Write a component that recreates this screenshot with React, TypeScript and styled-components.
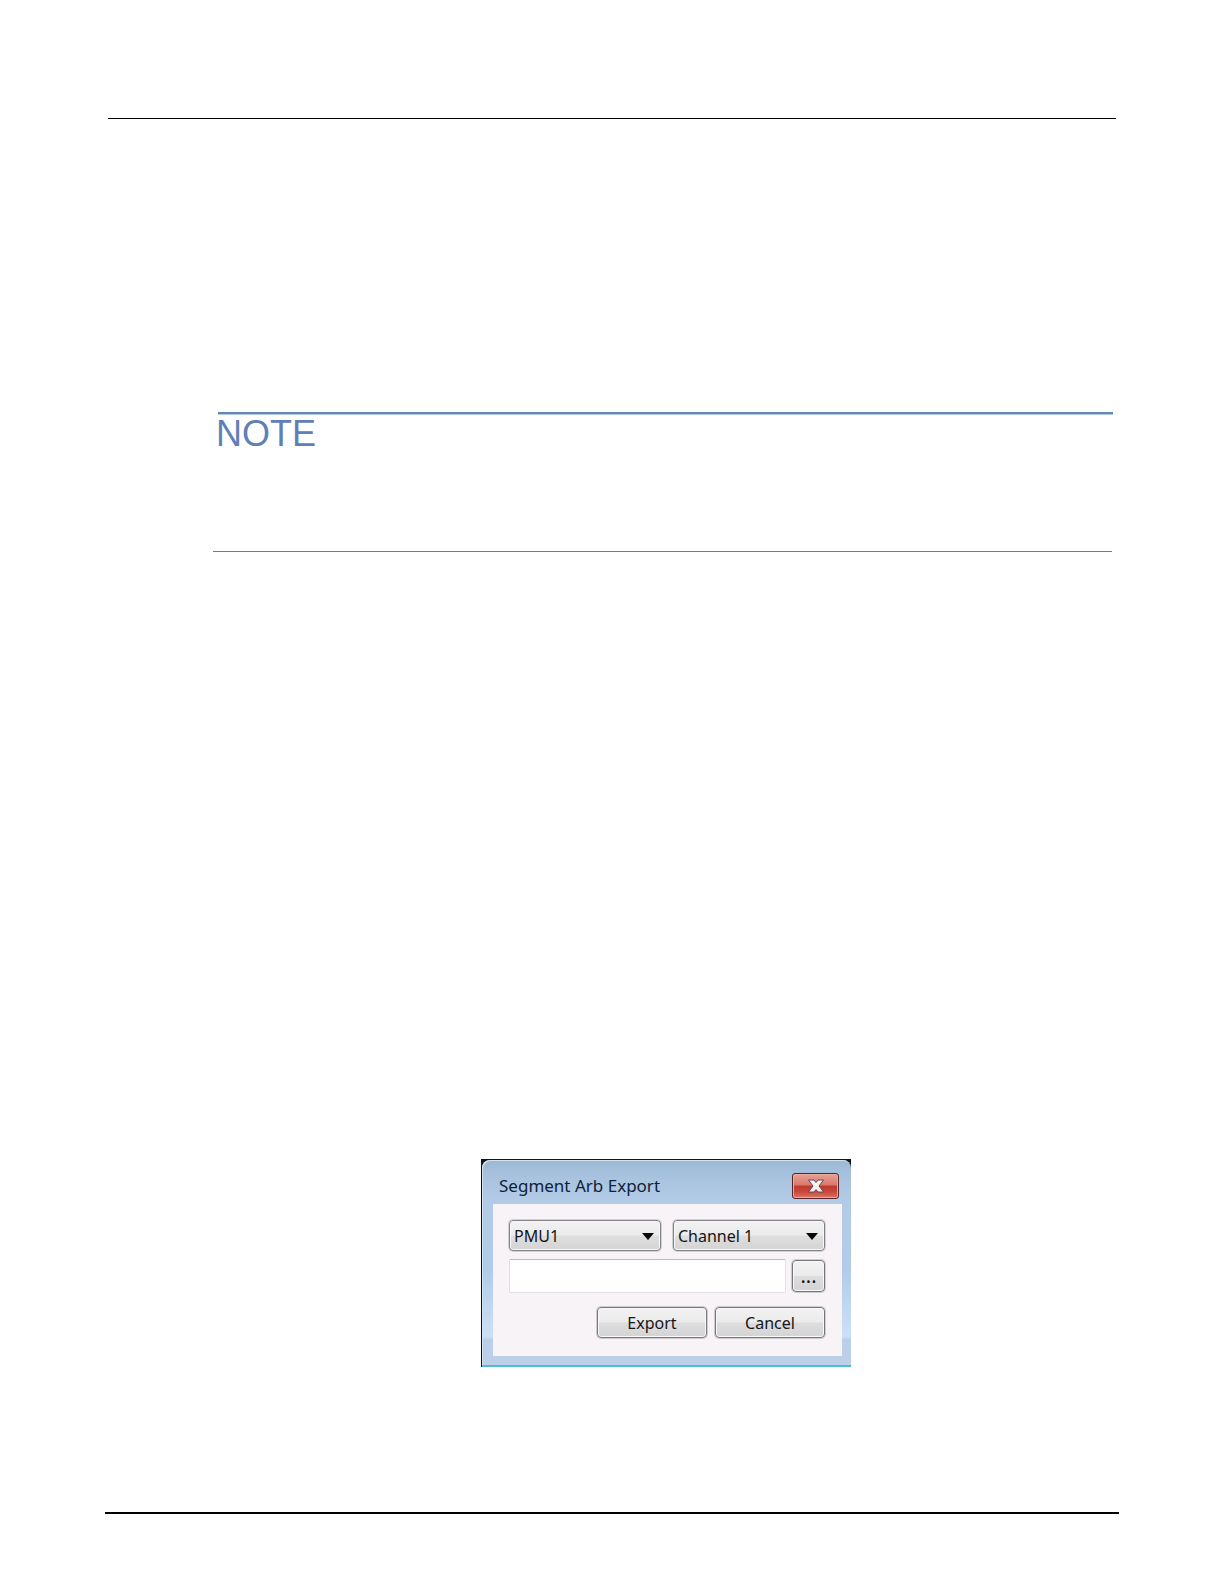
import React, { useState } from "react";
import styled, { createGlobalStyle } from "styled-components";

const GlobalStyle = createGlobalStyle`
  * { box-sizing: border-box; }
  body { margin: 0; background: #fff; }
`;

const Page = styled.main`
  min-height: 100vh;
  display: flex;
  flex-direction: column;
  padding: 118px 105px 70px;
  font-family: "Liberation Sans", Arial, sans-serif;
`;

const HeaderRule = styled.hr`
  align-self: stretch;
  margin: 0 3px;
  border: 0;
  border-top: 1px solid #000;
`;

const Note = styled.section`
  margin: 293px 7px 0 108px;
  height: 140px;
  border-bottom: 1px solid #687b98;
`;

const NoteTitle = styled.h2`
  margin: 0 -1px 0 5px;
  padding-top: 2px;
  border-top: 2px solid #6786b8;
  box-shadow: inset 0 1px #b4c8df;
  color: #5f80b6;
  font-size: 36px;
  font-weight: 400;
  line-height: 36px;
  text-indent: -2px;
`;

const Figure = styled.div`
  display: flex;
  justify-content: center;
  margin: 607px 6px 145px 114px;
`;

const Window = styled.form`
  width: 370px;
  background: #10141a;
  border: solid #10141a;
  border-width: 1px 0 0 1px;
  font-family: "Noto Sans", Tahoma, sans-serif;
`;

const Frame = styled.div`
  padding: 0 9px 9px 11px;
  border-bottom: 2px solid #4dbdd0;
  border-radius: 8px 8px 0 0;
  background: linear-gradient(#9cb8d5 0, #aac4e0 20px, #b3cbe6 44px, #b1cce9 110px, #cbe0f5 176px, #b9cfe9 180px, #bdcfe9 100%);
  box-shadow: inset 1px 1px #d5e2ed;
`;

const TitleBar = styled.header`
  height: 44px;
  display: flex;
  align-items: center;
  justify-content: space-between;
  padding: 8px 3px 0 6px;
`;

const Title = styled.h3`
  margin: 0;
  color: #0d2238;
  font-size: 17px;
  line-height: 24px;
  font-weight: 400;
`;

const CloseButton = styled.button`
  display: grid;
  place-items: center;
  width: 47px;
  height: 26px;
  padding: 0;
  border: 1px solid #57242c;
  border-radius: 3px;
  background: linear-gradient(#e6a294 0, #d9786b 46%, #be392c 50%, #c8483b 75%, #dc7767 100%);
  box-shadow: inset 0 0 0 1px #e9aaa0;
`;

const Client = styled.div`
  display: flex;
  flex-direction: column;
  height: 152px;
  padding: 16px 17px 16px 16px;
  background: #f8f3f7;
`;

const Selects = styled.div`
  display: grid;
  grid-template-columns: 1fr 1fr;
  gap: 12px;
`;

const SelectBox = styled.label`
  position: relative;
  display: block;
  height: 31px;
`;

const Select = styled.select`
  appearance: none;
  width: 100%;
  height: 31px;
  padding: 0 28px 0 4px;
  border: 1px solid #828286;
  border-radius: 4px;
  background: linear-gradient(#f3f2f3 0, #ebebec 48%, #dededf 52%, #d4d4d5 100%);
  box-shadow: inset 0 0 0 1px #f8f8f8, 0 0 0 1px #d3d0d4;
  color: #151515;
  font-family: inherit;
  font-size: 16px;
`;

const Arrow = styled.svg`
  position: absolute;
  right: 7px;
  top: 13px;
  pointer-events: none;
`;

const FileRow = styled.div`
  display: flex;
  align-items: center;
  gap: 6px;
  margin-top: 8px;
`;

const FileInput = styled.input`
  flex: 1;
  min-width: 0;
  height: 34px;
  padding: 0 6px;
  border: 1px solid #e1dfe4;
  border-top-color: #bab9bf;
  border-radius: 2px;
  background: #fff;
  font-family: inherit;
  font-size: 16px;
`;

const Button = styled.button<{ $compact?: boolean }>`
  width: ${(p) => (p.$compact ? "33px" : "110px")};
  height: ${(p) => (p.$compact ? "32px" : "31px")};
  padding: 0;
  border: 1px solid #78787c;
  border-radius: 4px;
  background: linear-gradient(#f3f2f3 0, #ebebec 48%, #dddddf 52%, #d4d4d5 100%);
  box-shadow: inset 0 0 0 1px #f8f8f8, 0 0 0 1px #cfccd0;
  color: #151515;
  font-family: inherit;
  font-size: ${(p) => (p.$compact ? "20px" : "16px")};
  line-height: 24px;
`;

const Actions = styled.div`
  display: flex;
  justify-content: flex-end;
  gap: 8px;
  margin-top: 14px;
`;

const FooterRule = styled.hr`
  align-self: stretch;
  margin: auto 0 0;
  border: 0;
  border-top: 2px solid #000;
`;

function Dropdown({ name, options }: { name: string; options: string[] }) {
  return (
    <SelectBox>
      <Select aria-label={name} defaultValue={options[0]}>
        {options.map((option) => (
          <option key={option}>{option}</option>
        ))}
      </Select>
      <Arrow width="12" height="7" viewBox="0 0 12 7" aria-hidden="true">
        <path d="M0 0h12L6 7z" fill="#080808" />
      </Arrow>
    </SelectBox>
  );
}

export default function App() {
  const [path, setPath] = useState("");
  return (
    <>
      <GlobalStyle />
      <Page>
        <HeaderRule />
        <Note>
          <NoteTitle>NOTE</NoteTitle>
        </Note>
        <Figure>
          <Window onSubmit={(e) => e.preventDefault()}>
            <Frame>
              <TitleBar>
                <Title>Segment Arb Export</Title>
                <CloseButton type="button" aria-label="Close">
                  <svg width="18" height="14" viewBox="0 0 18 14" aria-hidden="true">
                    <path
                      d="M1.500 1h5.500l2 2.500L11 1h5.500l-4.500 6 4.500 6H11l-2-2.500L7 13H1.500L6 7z"
                      fill="#f4f4f4"
                      stroke="#694650"
                      strokeWidth="1"
                      strokeLinejoin="round"
                    />
                  </svg>
                </CloseButton>
              </TitleBar>
              <Client>
                <Selects>
                  <Dropdown name="Instrument" options={["PMU1"]} />
                  <Dropdown name="Channel" options={["Channel 1"]} />
                </Selects>
                <FileRow>
                  <FileInput aria-label="File" value={path} onChange={(e) => setPath(e.target.value)} />
                  <Button $compact type="button" aria-label="Browse">...</Button>
                </FileRow>
                <Actions>
                  <Button type="submit">Export</Button>
                  <Button type="button">Cancel</Button>
                </Actions>
              </Client>
            </Frame>
          </Window>
        </Figure>
        <FooterRule />
      </Page>
    </>
  );
}
